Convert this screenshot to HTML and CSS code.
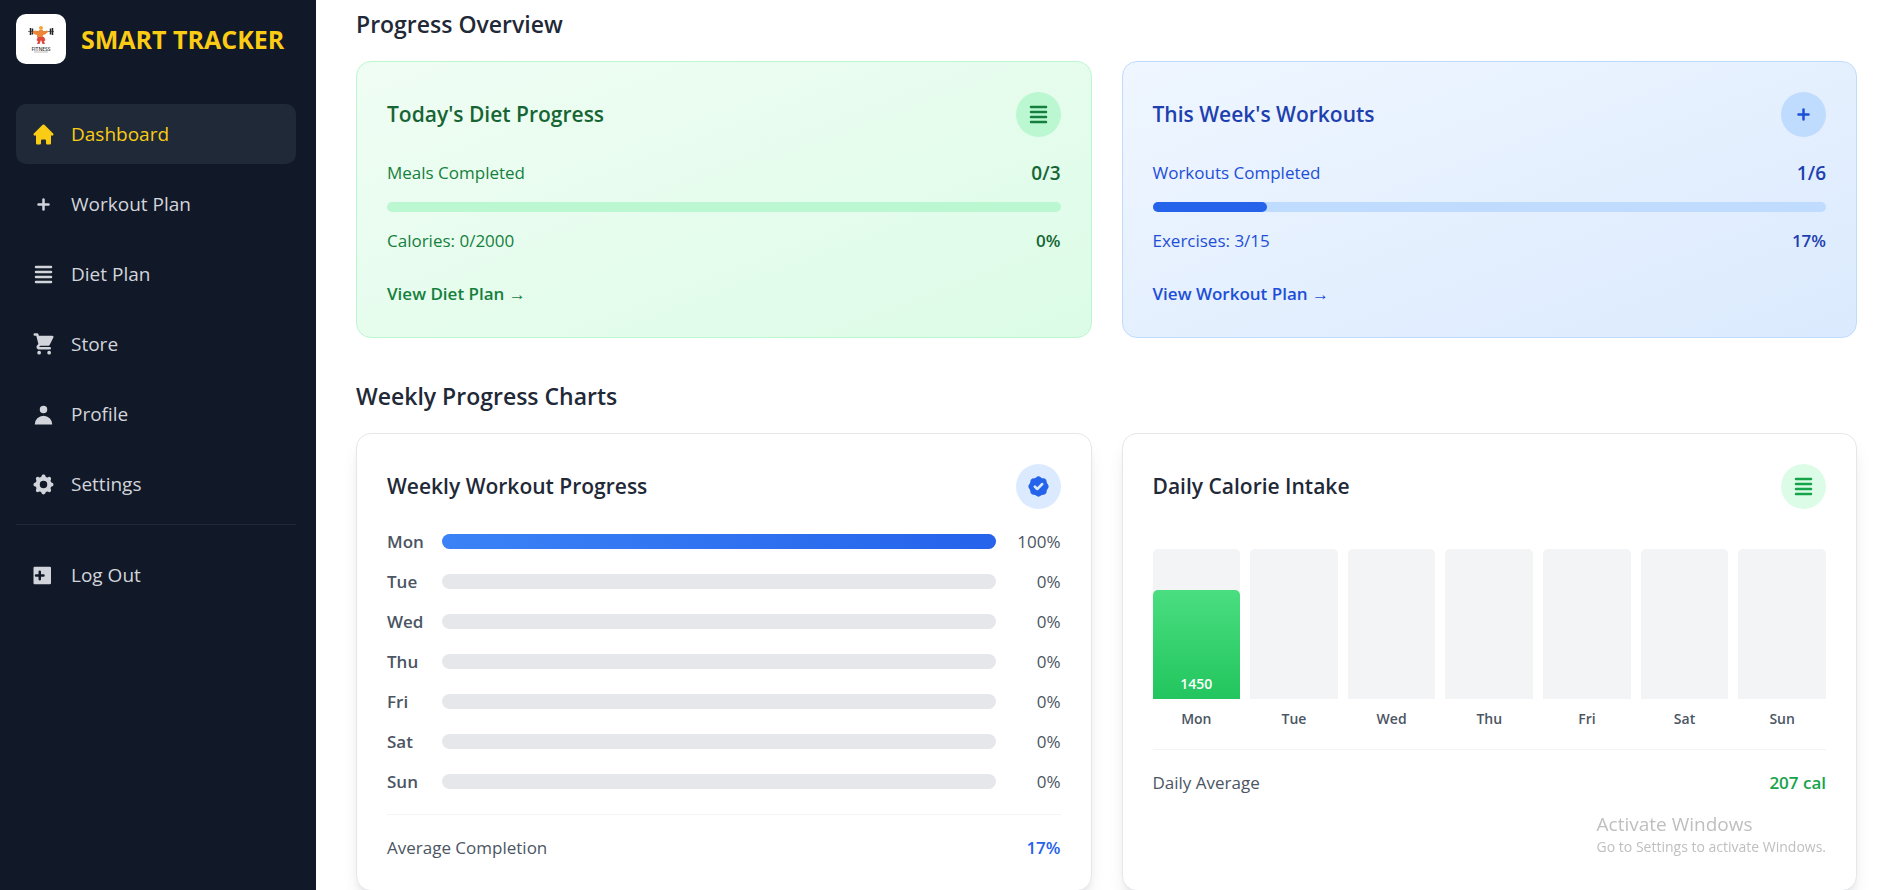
FILE: index.html
```html
<!DOCTYPE html>
<html lang="en">
<head>
<meta charset="utf-8">
<meta name="viewport" content="width=device-width, initial-scale=1">
<title>Smart Tracker</title>
<link rel="stylesheet" href="styles.css">
</head>
<body>
<svg class="sprite" aria-hidden="true">
  <symbol id="i-home" viewBox="0 0 20 20"><path d="M10.707 2.293a1 1 0 00-1.414 0l-7 7a1 1 0 001.414 1.414L4 10.414V17a1 1 0 001 1h2a1 1 0 001-1v-2a1 1 0 011-1h2a1 1 0 011 1v2a1 1 0 001 1h2a1 1 0 001-1v-6.586l.293.293a1 1 0 001.414-1.414l-7-7z"/></symbol>
  <symbol id="i-plus" viewBox="0 0 20 20"><path d="M10 5a1 1 0 011 1v3h3a1 1 0 110 2h-3v3a1 1 0 11-2 0v-3H6a1 1 0 110-2h3V6a1 1 0 011-1z"/></symbol>
  <symbol id="i-list" viewBox="0 0 20 20"><path d="M3 4a1 1 0 011-1h12a1 1 0 110 2H4a1 1 0 01-1-1zm0 4a1 1 0 011-1h12a1 1 0 110 2H4a1 1 0 01-1-1zm0 4a1 1 0 011-1h12a1 1 0 110 2H4a1 1 0 01-1-1zm0 4a1 1 0 011-1h12a1 1 0 110 2H4a1 1 0 01-1-1z"/></symbol>
  <symbol id="i-cart" viewBox="0 0 20 20"><path d="M3 1a1 1 0 000 2h1.22l.305 1.222a.997.997 0 00.01.042l1.358 5.43-.893.892C3.74 11.846 4.632 14 6.414 14H15a1 1 0 000-2H6.414l1-1H14a1 1 0 00.894-.553l3-6A1 1 0 0017 3H6.28l-.31-1.243A1 1 0 005 1H3zM16 16.5a1.5 1.5 0 11-3 0 1.5 1.5 0 013 0zM6.5 18a1.5 1.5 0 100-3 1.5 1.5 0 000 3z"/></symbol>
  <symbol id="i-user" viewBox="0 0 20 20"><path d="M10 9a3 3 0 100-6 3 3 0 000 6zm-7 9a7 7 0 1114 0H3z"/></symbol>
  <symbol id="i-cog" viewBox="0 0 20 20"><path fill-rule="evenodd" d="M11.49 3.17c-.38-1.56-2.6-1.56-2.98 0a1.532 1.532 0 01-2.286.948c-1.372-.836-2.942.734-2.106 2.106.54.886.061 2.042-.947 2.287-1.561.379-1.561 2.6 0 2.978a1.532 1.532 0 01.947 2.287c-.836 1.372.734 2.942 2.106 2.106a1.532 1.532 0 012.287.947c.379 1.561 2.6 1.561 2.978 0a1.533 1.533 0 012.287-.947c1.372.836 2.942-.734 2.106-2.106a1.533 1.533 0 01.947-2.287c1.561-.379 1.561-2.6 0-2.978a1.532 1.532 0 01-.947-2.287c.836-1.372-.734-2.942-2.106-2.106a1.532 1.532 0 01-2.287-.947zM10 13a3 3 0 100-6 3 3 0 000 6z"/></symbol>
  <symbol id="i-exit" viewBox="0 0 20 20"><path fill-rule="evenodd" d="M3 3a1 1 0 00-1 1v12a1 1 0 001 1h12a1 1 0 001-1V4a1 1 0 00-1-1H3zM7 6a1 1 0 011 1v2h2a1 1 0 110 2H8v2a1 1 0 11-2 0v-2H4a1 1 0 110-2h2V7a1 1 0 011-1z"/></symbol>
  <symbol id="i-badge" viewBox="0 0 20 20"><path fill-rule="evenodd" d="M6.267 3.455a3.066 3.066 0 001.745-.723 3.066 3.066 0 013.976 0 3.066 3.066 0 001.745.723 3.066 3.066 0 012.812 2.812c.051.643.304 1.254.723 1.745a3.066 3.066 0 010 3.976 3.066 3.066 0 00-.723 1.745 3.066 3.066 0 01-2.812 2.812 3.066 3.066 0 00-1.745.723 3.066 3.066 0 01-3.976 0 3.066 3.066 0 00-1.745-.723 3.066 3.066 0 01-2.812-2.812 3.066 3.066 0 00-.723-1.745 3.066 3.066 0 010-3.976 3.066 3.066 0 00.723-1.745 3.066 3.066 0 012.812-2.812zm7.44 5.252a1 1 0 00-1.414-1.414L9 10.586 7.707 9.293a1 1 0 00-1.414 1.414l2 2a1 1 0 001.414 0l4-4z"/></symbol>
</svg>

<div class="app">
  <aside class="sidebar">
    <div class="brand">
      <svg class="brand-logo" viewBox="0 0 50 50" role="img" aria-label="Fitness logo">
        <rect width="50" height="50" rx="10" fill="#fff"/>
        <path d="M12 17.500H38" stroke="#666" stroke-width=".8"/>
        <path d="M14.500 14v7M16.500 14.500v6M34.500 14.500v6M36.500 14v7" stroke="#222" stroke-width="1.500"/>
        <circle cx="25" cy="14" r="2" fill="#f6a338"/>
        <path d="M19 16.500l3 1 1.500-1.500h3l1.500 1.500 3-1 1 1.500-3 2.500-2 .5v2.500h-6V21l-2-.5-3-2.500z" fill="#ee8537"/>
        <path d="M22 23h6l1.500 3-1.500 1.500 1 2.500h-2.500L25 26l-1.500 4H21l1-2.500-1.500-1.500z" fill="#df4a3c"/>
        <text class="brand-word" x="25" y="36.500" text-anchor="middle">FITNESS</text>
        <path d="M18 38h14" stroke="#bbb" stroke-width="1"/>
      </svg>
      <span class="brand-name">SMART TRACKER</span>
    </div>
    <nav class="nav">
      <a class="nav-item nav-item-active" href="#dashboard"><svg class="icon"><use href="#i-home"/></svg>Dashboard</a>
      <a class="nav-item" href="#workout"><svg class="icon"><use href="#i-plus"/></svg>Workout Plan</a>
      <a class="nav-item" href="#diet"><svg class="icon"><use href="#i-list"/></svg>Diet Plan</a>
      <a class="nav-item" href="#store"><svg class="icon"><use href="#i-cart"/></svg>Store</a>
      <a class="nav-item" href="#profile"><svg class="icon"><use href="#i-user"/></svg>Profile</a>
      <a class="nav-item" href="#settings"><svg class="icon"><use href="#i-cog"/></svg>Settings</a>
    </nav>
    <div class="sidebar-foot">
      <button class="nav-item" type="button"><svg class="icon"><use href="#i-exit"/></svg>Log Out</button>
    </div>
  </aside>

  <main class="main">
    <section class="section">
      <h2 class="section-title">Progress Overview</h2>
      <div class="cards">
        <article class="card card-green">
          <header class="card-head">
            <h3 class="card-title">Today's Diet Progress</h3>
            <span class="badge"><svg class="icon"><use href="#i-list"/></svg></span>
          </header>
          <div class="stat stat-main"><span>Meals Completed</span><strong class="stat-value">0/3</strong></div>
          <div class="meter"><div class="meter-fill" style="width:0%"></div></div>
          <div class="stat"><span>Calories: 0/2000</span><strong class="stat-value">0%</strong></div>
          <a class="card-link" href="#diet">View Diet Plan <span class="arrow">→</span></a>
        </article>
        <article class="card card-blue">
          <header class="card-head">
            <h3 class="card-title">This Week's Workouts</h3>
            <span class="badge"><svg class="icon"><use href="#i-plus"/></svg></span>
          </header>
          <div class="stat stat-main"><span>Workouts Completed</span><strong class="stat-value">1/6</strong></div>
          <div class="meter"><div class="meter-fill" style="width:17%"></div></div>
          <div class="stat"><span>Exercises: 3/15</span><strong class="stat-value">17%</strong></div>
          <a class="card-link" href="#workout">View Workout Plan <span class="arrow">→</span></a>
        </article>
      </div>
    </section>

    <section class="section">
      <h2 class="section-title">Weekly Progress Charts</h2>
      <div class="cards">
        <article class="card card-plain">
          <header class="card-head">
            <h3 class="card-title">Weekly Workout Progress</h3>
            <span class="badge badge-blue"><svg class="icon"><use href="#i-badge"/></svg></span>
          </header>
          <div class="days">
            <div class="day"><span class="day-name">Mon</span><div class="track"><div class="track-fill" style="width:100%"></div></div><span class="day-value">100%</span></div>
            <div class="day"><span class="day-name">Tue</span><div class="track"></div><span class="day-value">0%</span></div>
            <div class="day"><span class="day-name">Wed</span><div class="track"></div><span class="day-value">0%</span></div>
            <div class="day"><span class="day-name">Thu</span><div class="track"></div><span class="day-value">0%</span></div>
            <div class="day"><span class="day-name">Fri</span><div class="track"></div><span class="day-value">0%</span></div>
            <div class="day"><span class="day-name">Sat</span><div class="track"></div><span class="day-value">0%</span></div>
            <div class="day"><span class="day-name">Sun</span><div class="track"></div><span class="day-value">0%</span></div>
          </div>
          <footer class="summary"><span>Average Completion</span><strong class="summary-blue">17%</strong></footer>
        </article>
        <article class="card card-plain">
          <header class="card-head">
            <h3 class="card-title">Daily Calorie Intake</h3>
            <span class="badge badge-green"><svg class="icon"><use href="#i-list"/></svg></span>
          </header>
          <div class="columns">
            <div class="column"><div class="column-track"><div class="column-fill" style="height:72.5%">1450</div></div><span>Mon</span></div>
            <div class="column"><div class="column-track"></div><span>Tue</span></div>
            <div class="column"><div class="column-track"></div><span>Wed</span></div>
            <div class="column"><div class="column-track"></div><span>Thu</span></div>
            <div class="column"><div class="column-track"></div><span>Fri</span></div>
            <div class="column"><div class="column-track"></div><span>Sat</span></div>
            <div class="column"><div class="column-track"></div><span>Sun</span></div>
          </div>
          <footer class="summary"><span>Daily Average</span><strong class="summary-green">207 cal</strong></footer>
        </article>
      </div>
    </section>
  </main>
</div>

<div class="watermark">
  <div class="watermark-title">Activate Windows</div>
  <div class="watermark-text">Go to Settings to activate Windows.</div>
</div>
</body>
</html>
```
FILE: styles.css
```css
* { box-sizing: border-box; }

body {
  margin: 0;
  background: #fff;
  color: #1f2937;
  font-family: "Segoe UI", "Open Sans", "Noto Sans", sans-serif;
  font-size: 17px;
  line-height: 25px;
}

h2, h3 { margin: 0; }
a { color: inherit; text-decoration: none; }
strong { font-weight: 600; }

.sprite { display: none; }
.icon { width: 25px; height: 25px; fill: currentColor; flex: none; }

.app {
  display: flex;
  min-height: 100vh;
}

/* Sidebar */
.sidebar {
  flex: none;
  width: 316px;
  padding: 14px 20px 20px 16px;
  background: #111827;
  color: #d1d5db;
}

.brand {
  display: flex;
  align-items: center;
  gap: 15px;
  margin-bottom: 40px;
}
.brand-logo { width: 50px; height: 50px; flex: none; }
.brand-word {
  font-size: 5px;
  font-weight: 600;
  fill: #333;
}
.brand-name {
  color: #facc15;
  font-size: 25px;
  font-weight: 700;
  white-space: nowrap;
}

.nav {
  display: flex;
  flex-direction: column;
  gap: 10px;
}
.nav-item {
  display: flex;
  align-items: center;
  gap: 15px;
  width: 100%;
  height: 60px;
  padding: 0 15px;
  border: 0;
  border-radius: 10px;
  background: transparent;
  color: inherit;
  font: inherit;
  font-size: 19px;
}
.nav-item-active { background: #1f2937; color: #facc15; }

.sidebar-foot {
  margin-top: 10px;
  padding-top: 20px;
  border-top: 1px solid #1f2937;
}

/* Content */
.main {
  flex: 1;
  min-width: 0;
  display: flex;
  flex-direction: column;
  gap: 40px;
  padding: 6px 35px 0 40px;
}
.section-title {
  margin-bottom: 18px;
  font-size: 23px;
  font-weight: 600;
  line-height: 37px;
}
.cards {
  display: grid;
  grid-template-columns: 1fr 1fr;
  gap: 30px;
}
.card {
  padding: 30px;
  border: 1px solid;
  border-radius: 15px;
}
.card-head {
  display: flex;
  align-items: center;
  justify-content: space-between;
  margin-bottom: 20px;
}
.card-title { font-size: 21px; font-weight: 600; }
.badge {
  display: flex;
  padding: 10px;
  border-radius: 50%;
}
.badge-blue { background: #dbeafe; color: #2563eb; }
.badge-green { background: #dcfce7; color: #16a34a; }

.stat {
  display: flex;
  align-items: center;
  justify-content: space-between;
  line-height: 28px;
}
.stat-main { line-height: 32px; }
.stat-main .stat-value { font-size: 19px; }
.meter {
  height: 10px;
  margin: 13px 0 15px;
  border-radius: 5px;
}
.meter-fill { height: 100%; border-radius: 5px; }
.card-link {
  display: block;
  margin-top: 25px;
  font-weight: 600;
  line-height: 27px;
}
.arrow { font-weight: 400; }

.card-green {
  background: linear-gradient(to bottom right, #f0fdf4, #dcfce7);
  border-color: #bbf7d0;
  color: #15803d;
}
.card-green .card-title, .card-green .stat-value { color: #166534; }
.card-green .badge, .card-green .meter { background: #bbf7d0; }
.card-green .meter-fill { background: #16a34a; }

.card-blue {
  background: linear-gradient(to bottom right, #eff6ff, #dbeafe);
  border-color: #bfdbfe;
  color: #1d4ed8;
}
.card-blue .card-title, .card-blue .stat-value { color: #1e40af; }
.card-blue .badge, .card-blue .meter { background: #bfdbfe; }
.card-blue .meter-fill { background: #2563eb; }

.card-plain {
  background: #fff;
  border-color: #e5e7eb;
  box-shadow: 0 12px 18px -4px rgba(0, 0, 0, .1), 0 5px 8px -5px rgba(0, 0, 0, .1);
}

/* Workout bars */
.days {
  display: grid;
  gap: 15px;
  color: #4b5563;
}
.day { display: flex; align-items: center; gap: 15px; }
.day-name { width: 40px; font-weight: 600; }
.day-value { width: 50px; text-align: right; }
.track {
  flex: 1;
  height: 15px;
  border-radius: 8px;
  background: #e5e7eb;
}
.track-fill {
  height: 100%;
  border-radius: 8px;
  background: linear-gradient(to right, #3b82f6, #2563eb);
}

/* Calorie columns */
.columns {
  display: flex;
  gap: 10px;
  margin-top: 40px;
}
.column {
  flex: 1;
  color: #4b5563;
  font-size: 14px;
  font-weight: 600;
  line-height: 20px;
  text-align: center;
}
.column-track {
  display: flex;
  align-items: flex-end;
  height: 150px;
  margin-bottom: 10px;
  border-radius: 5px 5px 0 0;
  background: #f3f4f6;
}
.column-fill {
  display: flex;
  flex: 1;
  align-items: flex-end;
  justify-content: center;
  padding-bottom: 5px;
  border-radius: 5px 5px 0 0;
  background: linear-gradient(to top, #22c55e, #4ade80);
  color: #fff;
}

.summary {
  display: flex;
  justify-content: space-between;
  margin-top: 20px;
  padding-top: 20px;
  border-top: 1px solid #f3f4f6;
  color: #4b5563;
}
.summary-blue { color: #2563eb; }
.summary-green { color: #16a34a; }

.watermark {
  position: fixed;
  right: 66px;
  bottom: 33px;
  color: #bfbfbf;
}
.watermark-title { font-size: 19px; }
.watermark-text { font-size: 14px; line-height: 20px; }
```
